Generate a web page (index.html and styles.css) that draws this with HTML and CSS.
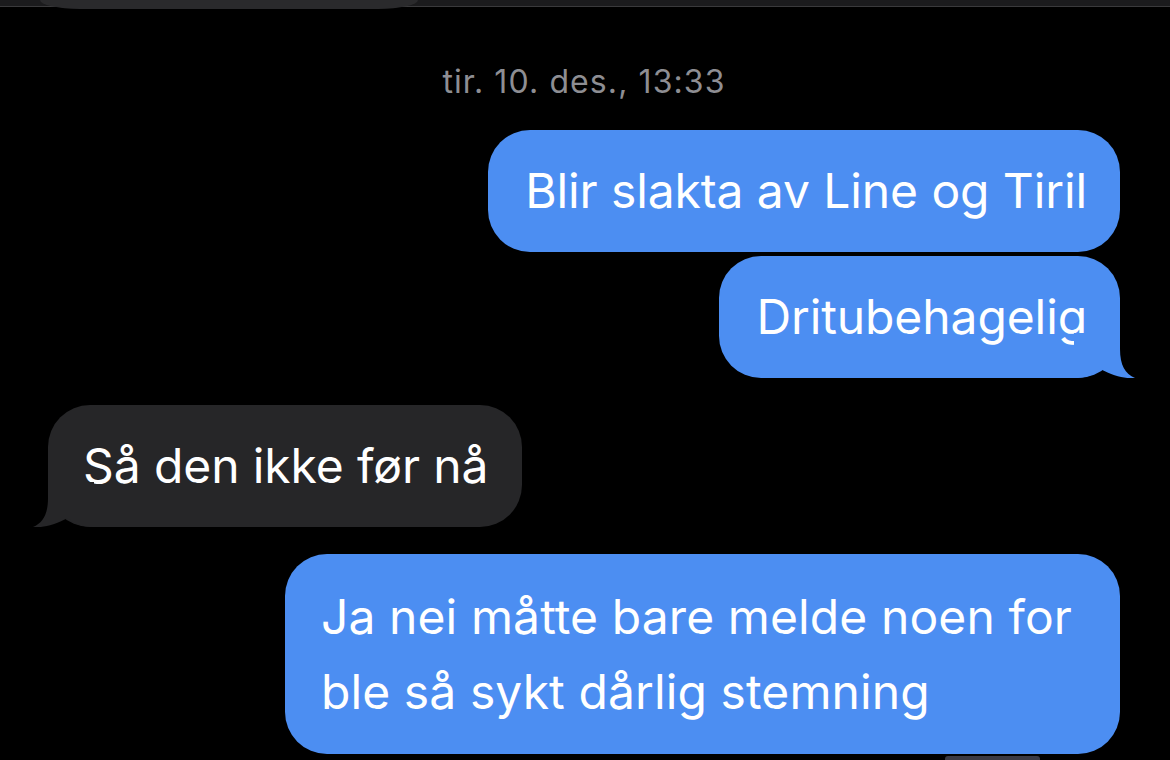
FILE: index.html
```html
<!DOCTYPE html>
<html lang="no">
<head>
<meta charset="utf-8">
<title>Meldinger</title>
<link rel="stylesheet" href="styles.css">
</head>
<body>
<div class="thread">
  <div class="top-strip"><div class="prev-bubble"></div></div>
  <div class="stamp">tir. 10. des., 13:33</div>
  <div class="row sent"><div class="bubble blue">Blir slakta av Line og Tiril</div></div>
  <div class="row sent tight"><div class="bubble blue">Dritubehagelig<svg class="tail tail-right" viewBox="0 0 61 45" width="61" height="45"><path d="M46 0 L46 16 C46 32 51 41 61 45 C51 46 40 43 26 36 C20 42 12 45 0 45 L0 0 Z"/></svg></div></div>
  <div class="row recv"><div class="bubble grey">Så den ikke før nå<svg class="tail tail-left" viewBox="0 0 61 45" width="61" height="45"><path d="M46 0 L46 16 C46 32 51 41 61 45 C51 46 40 43 26 36 C20 42 12 45 0 45 L0 0 Z"/></svg></div></div>
  <div class="row sent"><div class="bubble blue multi">Ja nei måtte bare melde noen for<br>ble så sykt dårlig stemning</div></div>
  <div class="row sent next"><div class="next-item"></div></div>
</div>
</body>
</html>
```
FILE: styles.css
```css
html, body {
  margin: 0;
  padding: 0;
  background: #000;
}
body {
  width: 1170px;
  height: 760px;
  overflow: hidden;
  font-family: Inter, "Noto Sans", "Liberation Sans", sans-serif;
  -webkit-font-smoothing: antialiased;
}
.thread {
  display: flex;
  flex-direction: column;
  padding: 0 50px 0 48px;
}
.top-strip {
  height: 6px;
  margin: 0 -50px 0 -48px;
  background: #1b1b1d;
  border-bottom: 1px solid #3a3a3c;
  position: relative;
}
.prev-bubble {
  position: absolute;
  left: 40px;
  width: 378px;
  top: 0;
  height: 9px;
  background: #2a2a2c;
  border-radius: 0 0 40px 40px / 0 0 9px 9px;
}
.stamp {
  text-align: center;
  color: #8e8e93;
  font-size: 32px;
  line-height: 36px;
  margin-top: 57px;
  margin-bottom: 30px;
  letter-spacing: 1.1px;
}
.row {
  display: flex;
  margin-top: 27px;
}
.stamp + .row { margin-top: 0; }
.row.tight { margin-top: 4px; }
.sent { justify-content: flex-end; }
.recv { justify-content: flex-start; }
.bubble {
  position: relative;
  font-size: 48px;
  letter-spacing: -0.1px;
  line-height: 73px;
  padding: 24px 33px 25px 37px;
  border-radius: 42px;
  color: #fff;
  white-space: nowrap;
}
.blue { background: #4c8ef2; }
.grey { background: #262628; }
.grey.bubble { padding-left: 35px; padding-right: 34px; }
.multi {
  letter-spacing: 0.1px;
  line-height: 75px;
  padding: 25px 48px 25px 36px;
}
.tail {
  position: absolute;
  bottom: 0;
  width: 61px;
  height: 45px;
}
.blue .tail { fill: #4c8ef2; }
.grey .tail { fill: #262628; }
.tail-right { right: -15px; }
.tail-left { left: -15px; transform: scaleX(-1); }
.next {
  margin-top: 2px;
  padding-right: 80px;
}
.next-item {
  width: 95px;
  height: 4px;
  background: #3a3a44;
  border-radius: 3px 3px 0 0;
}
```
